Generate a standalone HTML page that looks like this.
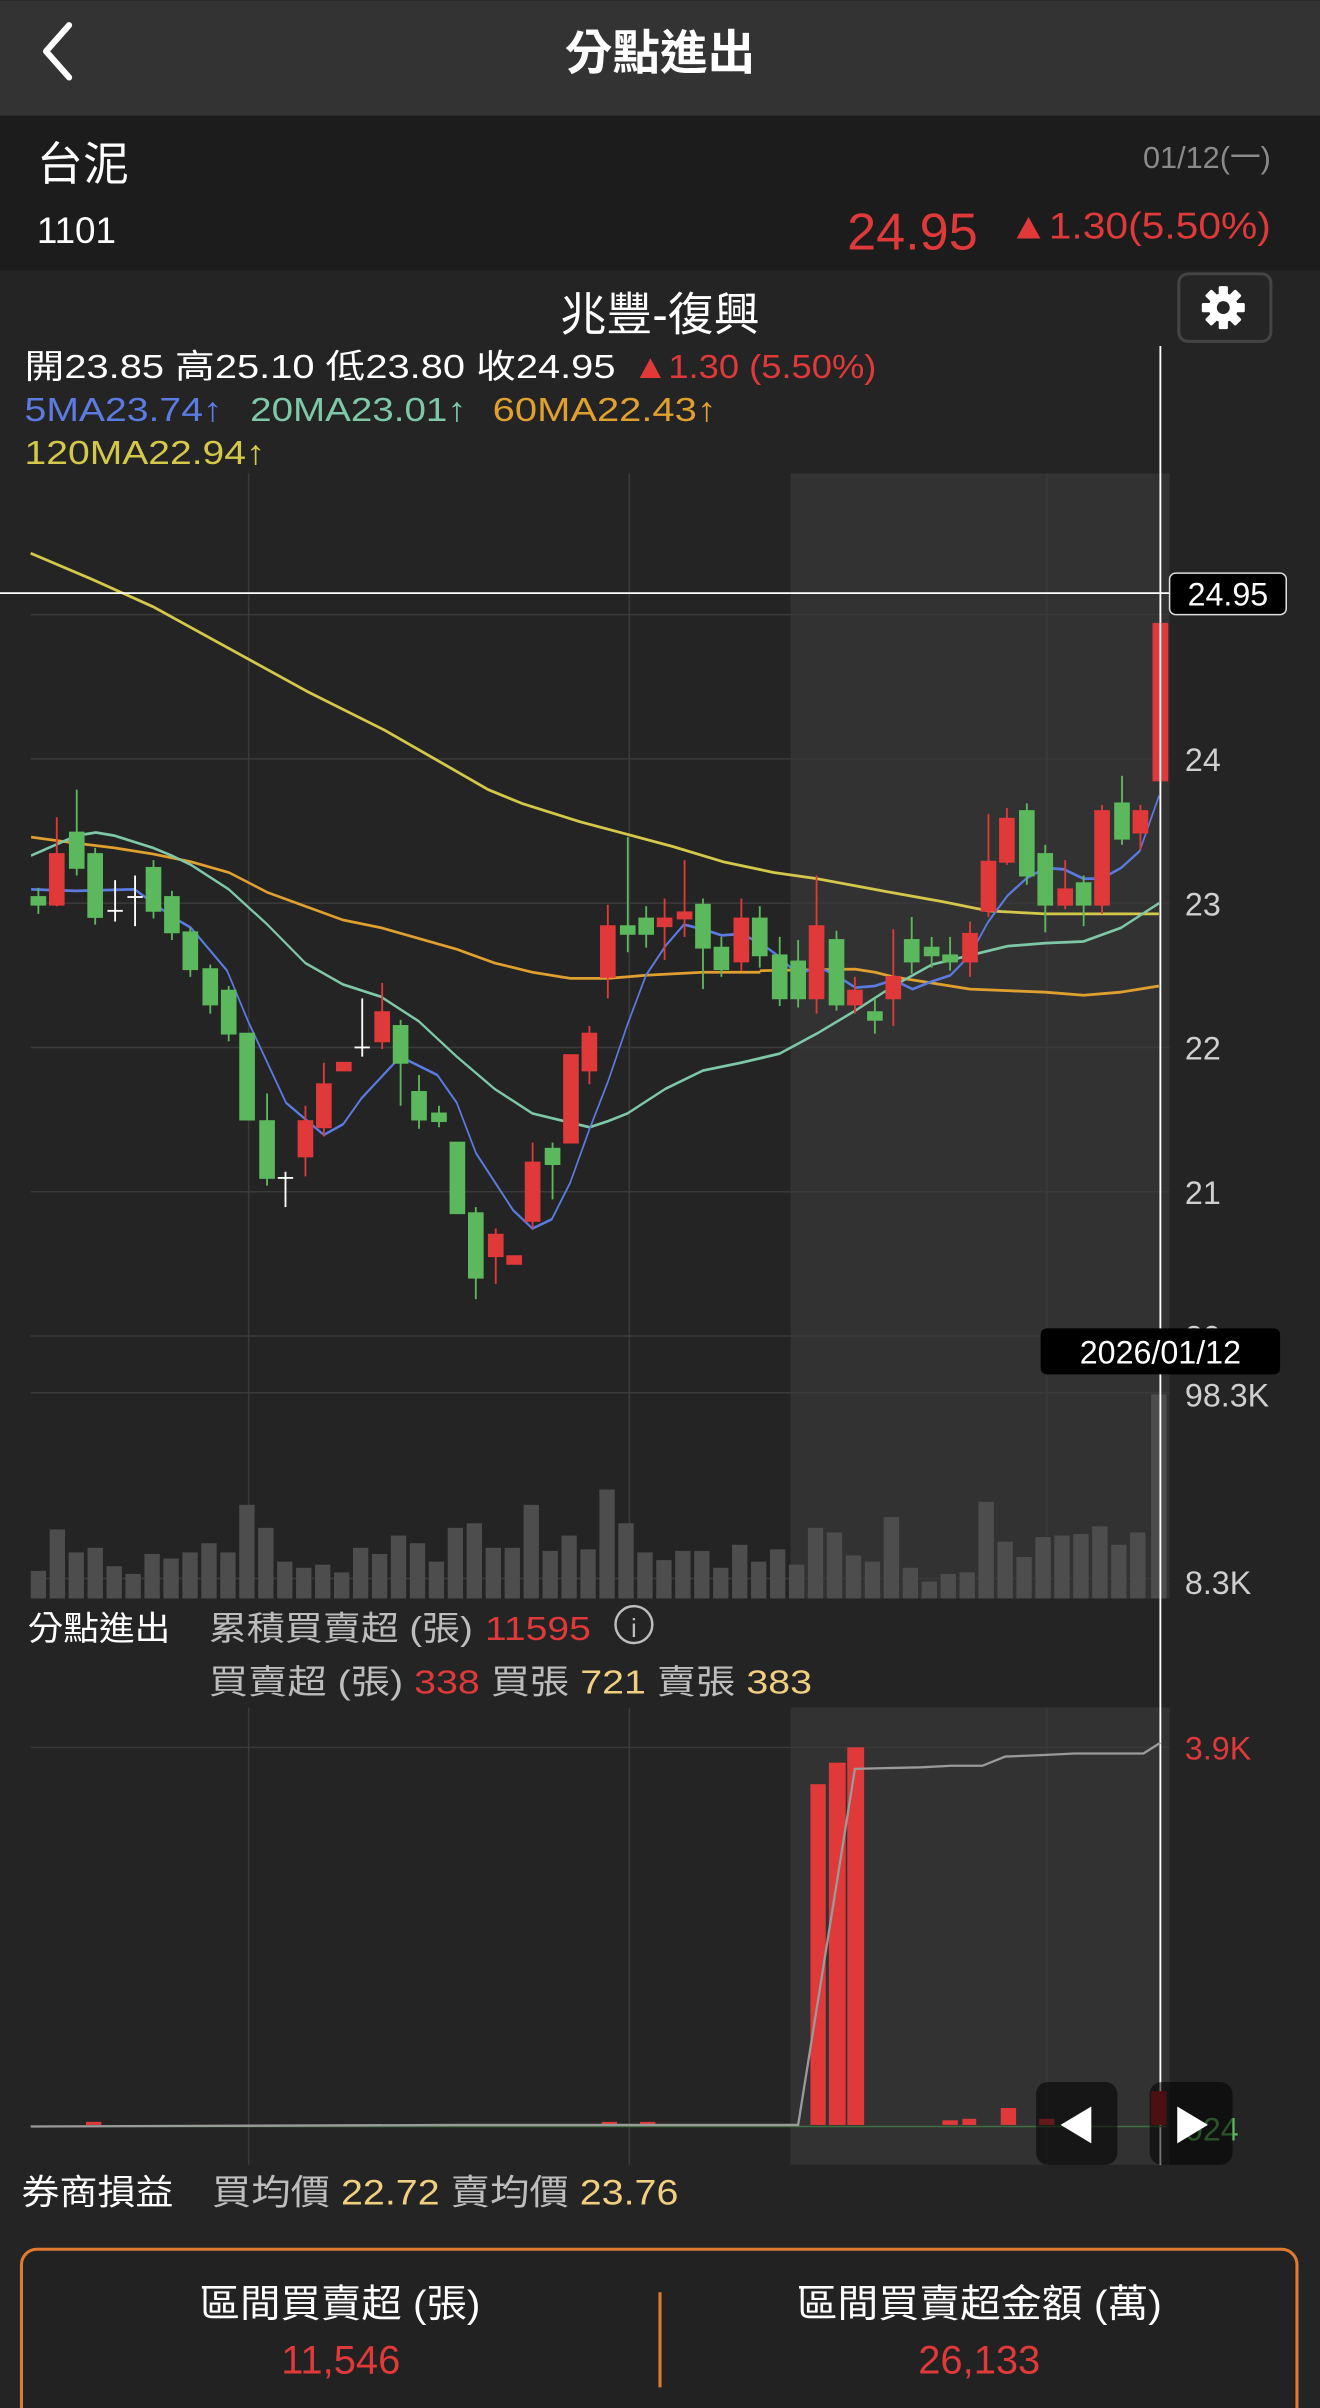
<!DOCTYPE html>
<html><head><meta charset="utf-8"><style>
html,body{margin:0;padding:0;background:#242424;width:1320px;height:2408px;overflow:hidden}
svg{display:block}
text{font-family:"Liberation Sans","Noto Sans CJK TC",sans-serif}
</style></head><body>
<svg width="1320" height="2408" viewBox="0 0 860 1568" xmlns="http://www.w3.org/2000/svg">
<rect width="860" height="1568" fill="#242424"/>
<!-- header -->
<rect x="0" y="0" width="860" height="75" fill="#333333"/>
<path d="M45 16 L30 33 L45 50" stroke="#fff" stroke-width="4" fill="none" stroke-linecap="round" stroke-linejoin="round"/>
<text x="430" y="45" font-size="31" font-weight="bold" fill="#fff" text-anchor="middle">分點進出</text>
<!-- stock info -->
<rect x="0" y="75" width="860" height="101" fill="#1c1c1c"/>
<text x="24" y="117" font-size="30" fill="#fff">台泥</text>
<text x="24" y="158" font-size="24" fill="#fff">1101</text>
<text x="828" y="109" font-size="20" fill="#8a8a8a" text-anchor="end">01/12(一)</text>
<text x="637" y="162" font-size="34" fill="#e0393a" text-anchor="end">24.95</text>
<text x="657" y="155" font-size="24" fill="#e0393a" textLength="171" lengthAdjust="spacingAndGlyphs">▲1.30(5.50%)</text>
<!-- broker title -->
<text x="430" y="215" font-size="30" fill="#fff" text-anchor="middle">兆豐-復興</text>
<rect x="768" y="178" width="60" height="44" rx="6" fill="#252525" stroke="#444" stroke-width="2"/>
<g transform="translate(797,200)" fill="#fff">
<circle r="9.5"/>
<g><rect x="-3" y="-14" width="6" height="28" rx="1"/><rect x="-3" y="-14" width="6" height="28" rx="1" transform="rotate(45)"/><rect x="-3" y="-14" width="6" height="28" rx="1" transform="rotate(90)"/><rect x="-3" y="-14" width="6" height="28" rx="1" transform="rotate(135)"/></g>
<circle r="4.2" fill="#252525"/>
</g>
<text x="16" y="246" font-size="22" fill="#fff" textLength="385" lengthAdjust="spacingAndGlyphs">開23.85 高25.10 低23.80 收24.95</text>
<text x="412" y="246" font-size="22" fill="#e0393a" textLength="159" lengthAdjust="spacingAndGlyphs">▲1.30 (5.50%)</text>
<text x="16" y="274" font-size="22" fill="#5b7be0" textLength="129" lengthAdjust="spacingAndGlyphs">5MA23.74↑</text>
<text x="163" y="274" font-size="22" fill="#7ec8a8" textLength="141" lengthAdjust="spacingAndGlyphs">20MA23.01↑</text>
<text x="321" y="274" font-size="22" fill="#e0a030" textLength="146" lengthAdjust="spacingAndGlyphs">60MA22.43↑</text>
<text x="16" y="302" font-size="22" fill="#d4c84a" textLength="157" lengthAdjust="spacingAndGlyphs">120MA22.94↑</text>
<!-- shaded region -->
<rect x="515" y="308" width="247" height="733" fill="#323232"/>
<rect x="515" y="1112" width="247" height="298" fill="#323232"/>
<!-- grid -->
<g stroke="#3a3a3a" stroke-width="1">
<line x1="162" y1="308" x2="162" y2="1041"/><line x1="410" y1="308" x2="410" y2="1041"/><line x1="682" y1="308" x2="682" y2="1041"/>
<line x1="162" y1="1112" x2="162" y2="1410"/><line x1="410" y1="1112" x2="410" y2="1410"/><line x1="682" y1="1112" x2="682" y2="1410"/>
<line x1="20" y1="400" x2="762" y2="400"/><line x1="20" y1="494" x2="762" y2="494"/><line x1="20" y1="588" x2="762" y2="588"/><line x1="20" y1="682" x2="762" y2="682"/><line x1="20" y1="776" x2="762" y2="776"/><line x1="20" y1="870" x2="762" y2="870"/>
<line x1="20" y1="907" x2="762" y2="907"/><line x1="20" y1="1028" x2="762" y2="1028"/>
<line x1="20" y1="1138" x2="762" y2="1138"/>
</g>
<g font-size="21" fill="#cfcfcf">
<text x="772" y="502">24</text><text x="772" y="596">23</text><text x="772" y="690">22</text><text x="772" y="784">21</text><text x="772" y="878">20</text>
<text x="772" y="916">98.3K</text><text x="772" y="1038">8.3K</text>
</g>
<!-- volume -->
<g fill="#4d4d4d">
<rect x="20" y="1023" width="10" height="18"/><rect x="32.35" y="996" width="10" height="45"/><rect x="44.7" y="1011" width="10" height="30"/><rect x="57.05" y="1008" width="10" height="33"/><rect x="69.4" y="1020" width="10" height="21"/><rect x="81.75" y="1025" width="10" height="16"/><rect x="94.1" y="1012" width="10" height="29"/><rect x="106.45" y="1015" width="10" height="26"/><rect x="118.8" y="1011" width="10" height="30"/><rect x="131.15" y="1005" width="10" height="36"/>
<rect x="143.5" y="1011" width="10" height="30"/><rect x="155.85" y="980" width="10" height="61"/><rect x="168.2" y="995" width="10" height="46"/><rect x="180.55" y="1017" width="10" height="24"/><rect x="192.9" y="1021" width="10" height="20"/><rect x="205.25" y="1019" width="10" height="22"/><rect x="217.6" y="1024" width="10" height="17"/><rect x="229.95" y="1008" width="10" height="33"/><rect x="242.3" y="1012" width="10" height="29"/><rect x="254.65" y="1000" width="10" height="41"/>
<rect x="267" y="1005" width="10" height="36"/><rect x="279.35" y="1017" width="10" height="24"/><rect x="291.7" y="995" width="10" height="46"/><rect x="304.05" y="992" width="10" height="49"/><rect x="316.4" y="1008" width="10" height="33"/><rect x="328.75" y="1008" width="10" height="33"/><rect x="341.1" y="980" width="10" height="61"/><rect x="353.45" y="1010" width="10" height="31"/><rect x="365.8" y="1000" width="10" height="41"/><rect x="378.15" y="1009" width="10" height="32"/>
<rect x="390.5" y="970" width="10" height="71"/><rect x="402.85" y="992" width="10" height="49"/><rect x="415.2" y="1011" width="10" height="30"/><rect x="427.55" y="1016" width="10" height="25"/><rect x="439.9" y="1010" width="10" height="31"/><rect x="452.25" y="1010" width="10" height="31"/><rect x="464.6" y="1021" width="10" height="20"/><rect x="476.95" y="1006" width="10" height="35"/><rect x="489.3" y="1017" width="10" height="24"/><rect x="501.65" y="1009" width="10" height="32"/>
<rect x="514" y="1019" width="10" height="22"/><rect x="526.35" y="995" width="10" height="46"/><rect x="538.7" y="998" width="10" height="43"/><rect x="551.05" y="1013" width="10" height="28"/><rect x="563.4" y="1017" width="10" height="24"/><rect x="575.75" y="988" width="10" height="53"/><rect x="588.1" y="1021" width="10" height="20"/><rect x="600.45" y="1030" width="10" height="11"/><rect x="612.8" y="1025" width="10" height="16"/><rect x="625.15" y="1024" width="10" height="17"/>
<rect x="637.5" y="978" width="10" height="63"/><rect x="649.85" y="1004" width="10" height="37"/><rect x="662.2" y="1014" width="10" height="27"/><rect x="674.55" y="1001" width="10" height="40"/><rect x="686.9" y="1000" width="10" height="41"/><rect x="699.25" y="999" width="10" height="42"/><rect x="711.6" y="994" width="10" height="47"/><rect x="723.95" y="1006" width="10" height="35"/><rect x="736.3" y="998" width="10" height="43"/><rect x="750" y="908" width="10" height="133"/>
</g>
<!-- MA lines -->
<g fill="none" stroke-width="1.8" stroke-linejoin="round">
<polyline stroke="#d4c84a" points="20,360 60,377 100,395 160,428 200,450 250,475 285,495 318,514 340,523 378,535 408,543 438,551 471,561 504,568 532,572 575,580 614,587 644,593 681,595 712,595 755,595"/>
<polyline stroke="#e0a030" points="37,545 91,549 136,552 182,556 227,561 272,568 318,581 363,590 408,599 453,604 498,611 543,618 588,627 633,633 678,637 723,637 768,635 836,633 904,633" transform="scale(0.548,1)"/>
<polyline stroke="#e0a030" points="495,632 557,631 570,633 582,636 607,640 632,644 656,645 681,646 706,648 730,646 755,642"/>
<polyline stroke="#7ec8a8" points="37,557 91,544 114,542 136,544 182,552 204,557 227,563 272,579 318,602 363,627 408,641 453,649 498,665 543,688 588,709 633,725 678,731 701,734 723,730 746,725 791,709 836,697 881,692 927,686 971,673 1017,658 1062,642 1108,628 1153,622 1198,616 1243,614 1288,613 1333,604 1378,588" transform="scale(0.548,1)"/>
<polyline stroke="#5b7be0" points="37,579 90,580 160,579 205,597 227,604 270,632 295,665 340,718 385,739 408,732 430,715 476,688 520,700 543,718 566,751 610,788 633,800 656,794 678,770 701,735 723,704 746,667 768,635 791,616 813,602 836,605 858,609 881,608 904,614 927,623 949,635 971,629 994,635 1017,643 1040,642 1062,638 1085,644 1108,639 1130,635 1153,622 1175,600 1198,583 1220,572 1243,565 1265,566 1288,572 1310,572 1333,565 1355,554 1378,518" transform="scale(0.548,1)"/>
</g>
<!-- candles -->
<g stroke-width="1.2">
<g stroke="#5cb85c" fill="#5cb85c">
<line x1="25" y1="578" x2="25" y2="595"/><rect x="20.5" y="584" width="9" height="5"/>
<line x1="50" y1="514" x2="50" y2="570"/><rect x="45.5" y="542" width="9" height="23"/>
<line x1="62" y1="552" x2="62" y2="602"/><rect x="57.5" y="556" width="9" height="41"/>
<line x1="100" y1="560" x2="100" y2="598"/><rect x="95.5" y="565" width="9" height="28"/>
<line x1="112" y1="580" x2="112" y2="612"/><rect x="107.5" y="584" width="9" height="23"/>
<line x1="124" y1="604" x2="124" y2="636"/><rect x="119.5" y="607" width="9" height="24"/>
<line x1="137" y1="628" x2="137" y2="660"/><rect x="132.5" y="631" width="9" height="23"/>
<line x1="149" y1="642" x2="149" y2="678"/><rect x="144.5" y="645" width="9" height="28"/>
<rect x="156.5" y="673" width="9" height="56"/>
<line x1="174" y1="712" x2="174" y2="772"/><rect x="169.5" y="730" width="9" height="37"/>
<line x1="261" y1="664" x2="261" y2="720"/><rect x="256.5" y="668" width="9" height="24"/>
<line x1="273" y1="700" x2="273" y2="735"/><rect x="268.5" y="711" width="9" height="18"/>
<line x1="286" y1="720" x2="286" y2="734"/><rect x="281.5" y="725" width="9" height="5"/>
<rect x="293.5" y="744" width="9" height="46"/>
<line x1="310" y1="786" x2="310" y2="846"/><rect x="305.5" y="790" width="9" height="42"/>
<line x1="360" y1="744" x2="360" y2="781"/><rect x="355.5" y="748" width="9" height="10"/>
<line x1="409" y1="545" x2="409" y2="620"/><rect x="404.5" y="603" width="9" height="5"/>
<line x1="421" y1="590" x2="421" y2="617"/><rect x="416.5" y="598" width="9" height="10"/>
<line x1="458" y1="585" x2="458" y2="644"/><rect x="453.5" y="589" width="9" height="28"/>
<line x1="470" y1="610" x2="470" y2="636"/><rect x="465.5" y="617" width="9" height="14"/>
<line x1="495" y1="590" x2="495" y2="630"/><rect x="490.5" y="598" width="9" height="24"/>
<line x1="508" y1="610" x2="508" y2="655"/><rect x="503.5" y="622" width="9" height="28"/>
<line x1="520" y1="612" x2="520" y2="656"/><rect x="515.5" y="626" width="9" height="24"/>
<line x1="545" y1="606" x2="545" y2="658"/><rect x="540.5" y="612" width="9" height="42"/>
<line x1="570" y1="650" x2="570" y2="673"/><rect x="565.5" y="659" width="9" height="5"/>
<line x1="594" y1="597" x2="594" y2="634"/><rect x="589.5" y="612" width="9" height="14"/>
<line x1="607" y1="610" x2="607" y2="630"/><rect x="602.5" y="617" width="9" height="5"/>
<line x1="619" y1="610" x2="619" y2="632"/><rect x="614.5" y="622" width="9" height="4"/>
<line x1="669" y1="523" x2="669" y2="576"/><rect x="664.5" y="528" width="9" height="42"/>
<line x1="681" y1="550" x2="681" y2="607"/><rect x="676.5" y="556" width="9" height="33"/>
<line x1="706" y1="570" x2="706" y2="603"/><rect x="701.5" y="575" width="9" height="14"/>
<line x1="731" y1="505" x2="731" y2="550"/><rect x="726.5" y="523" width="9" height="23"/>
</g>
<g stroke="#e0393a" fill="#e0393a">
<line x1="37" y1="532" x2="37" y2="590"/><rect x="32.5" y="556" width="9" height="33"/>
<line x1="199" y1="720" x2="199" y2="766"/><rect x="194.5" y="730" width="9" height="23"/>
<line x1="211" y1="692" x2="211" y2="740"/><rect x="206.5" y="706" width="9" height="28"/>
<rect x="219.5" y="692" width="9" height="5"/>
<line x1="249" y1="640" x2="249" y2="683"/><rect x="244.5" y="659" width="9" height="19"/>
<line x1="323" y1="800" x2="323" y2="836"/><rect x="318.5" y="804" width="9" height="14"/>
<rect x="330.5" y="818" width="9" height="5"/>
<line x1="347" y1="744" x2="347" y2="800"/><rect x="342.5" y="757" width="9" height="38"/>
<rect x="367.5" y="687" width="9" height="57"/>
<line x1="384" y1="668" x2="384" y2="706"/><rect x="379.5" y="673" width="9" height="24"/>
<line x1="396" y1="589" x2="396" y2="650"/><rect x="391.5" y="603" width="9" height="33"/>
<line x1="433" y1="585" x2="433" y2="625"/><rect x="428.5" y="598" width="9" height="5"/>
<line x1="446" y1="560" x2="446" y2="610"/><rect x="441.5" y="594" width="9" height="4"/>
<line x1="483" y1="585" x2="483" y2="632"/><rect x="478.5" y="598" width="9" height="28"/>
<line x1="532" y1="570" x2="532" y2="660"/><rect x="527.5" y="603" width="9" height="47"/>
<line x1="557" y1="636" x2="557" y2="660"/><rect x="552.5" y="645" width="9" height="9"/>
<line x1="582" y1="605" x2="582" y2="668"/><rect x="577.5" y="636" width="9" height="14"/>
<line x1="632" y1="600" x2="632" y2="636"/><rect x="627.5" y="608" width="9" height="18"/>
<line x1="644" y1="530" x2="644" y2="597"/><rect x="639.5" y="561" width="9" height="32"/>
<line x1="656" y1="526" x2="656" y2="563"/><rect x="651.5" y="533" width="9" height="28"/>
<line x1="694" y1="560" x2="694" y2="592"/><rect x="689.5" y="579" width="9" height="10"/>
<line x1="718" y1="524" x2="718" y2="595"/><rect x="713.5" y="528" width="9" height="61"/>
<line x1="743" y1="524" x2="743" y2="553"/><rect x="738.5" y="528" width="9" height="14"/>
<line x1="756" y1="400" x2="756" y2="512"/><rect x="751.5" y="406" width="9" height="102"/>
</g>
<g stroke="#fff" stroke-width="1.2">
<line x1="75" y1="573" x2="75" y2="600"/><line x1="70" y1="593" x2="80" y2="593"/>
<line x1="88" y1="570" x2="88" y2="603"/><line x1="83" y1="584" x2="93" y2="584"/>
<line x1="186" y1="763" x2="186" y2="786"/><line x1="181" y1="767" x2="191" y2="767"/>
<line x1="236" y1="650" x2="236" y2="688"/><line x1="231" y1="682" x2="241" y2="682"/>
</g>
</g>
<!-- crosshair -->
<line x1="0" y1="386" x2="762" y2="386" stroke="#fff" stroke-width="1.2"/>
<line x1="756" y1="225" x2="756" y2="1410" stroke="#fff" stroke-width="1.2"/>
<rect x="762" y="373" width="76" height="27" rx="4" fill="#000" stroke="#ddd" stroke-width="1"/>
<text x="800" y="394" font-size="21" fill="#fff" text-anchor="middle">24.95</text>
<rect x="678" y="865" width="156" height="30" rx="4" fill="#000"/>
<text x="756" y="888" font-size="21" fill="#fff" text-anchor="middle">2026/01/12</text>
<!-- 分點進出 labels -->
<text x="18" y="1068" font-size="22" fill="#fff" textLength="93" lengthAdjust="spacingAndGlyphs">分點進出</text>
<text x="136" y="1068" font-size="22" fill="#bdbdbd" textLength="172" lengthAdjust="spacingAndGlyphs">累積買賣超 (張)</text>
<text x="316" y="1068" font-size="22" fill="#e0393a" textLength="69" lengthAdjust="spacingAndGlyphs">11595</text>
<circle cx="413" cy="1058" r="12" fill="none" stroke="#bdbdbd" stroke-width="1.6"/>
<text x="413" y="1066" font-size="17" fill="#bdbdbd" text-anchor="middle">i</text>
<text x="136" y="1103" font-size="22" textLength="393" lengthAdjust="spacingAndGlyphs"><tspan fill="#bdbdbd">買賣超 (張) </tspan><tspan fill="#e0393a">338 </tspan><tspan fill="#bdbdbd">買張 </tspan><tspan fill="#f0d080">721 </tspan><tspan fill="#bdbdbd">賣張 </tspan><tspan fill="#f0d080">383</tspan></text>
<!-- lower chart -->
<text x="772" y="1146" font-size="21" fill="#e0393a">3.9K</text>
<line x1="20" y1="1385" x2="760" y2="1385" stroke="#3f6f3f" stroke-width="1"/>
<g fill="#e0393a">
<rect x="528" y="1162" width="10" height="222"/><rect x="540" y="1148" width="11" height="236"/><rect x="552" y="1138" width="11" height="246"/>
<rect x="56" y="1382" width="10" height="2"/><rect x="392" y="1382" width="10" height="2"/><rect x="417" y="1382" width="10" height="2"/>
<rect x="614" y="1381" width="10" height="3"/><rect x="627" y="1380" width="9" height="4"/><rect x="652" y="1373" width="10" height="11"/><rect x="677" y="1380" width="10" height="4"/>
<rect x="750" y="1362" width="10" height="22" fill="#a82525"/>
</g>
<polyline fill="none" stroke="#9a9a9a" stroke-width="1.5" points="20,1385 300,1384 520,1384 557,1152 600,1151 620,1150 640,1150 655,1144 680,1143 700,1142 745,1142 756,1135"/>
<rect x="675" y="1356" width="53" height="54" rx="8" fill="#000" fill-opacity="0.55"/>
<path d="M711 1372 L711 1396 L691 1384 Z" fill="#fff"/>
<text x="772" y="1394" font-size="21" fill="#5cb85c">024</text>
<rect x="749" y="1356" width="54" height="54" rx="8" fill="#000" fill-opacity="0.55"/>
<path d="M767 1372 L767 1396 L787 1384 Z" fill="#fff"/>
<!-- 券商損益 -->
<text x="14" y="1436" font-size="23" fill="#fff" textLength="99" lengthAdjust="spacingAndGlyphs">券商損益</text>
<text x="138" y="1436" font-size="23" textLength="304" lengthAdjust="spacingAndGlyphs"><tspan fill="#bdbdbd">買均價 </tspan><tspan fill="#f0d080">22.72 </tspan><tspan fill="#bdbdbd">賣均價 </tspan><tspan fill="#f0d080">23.76</tspan></text>
<!-- summary box -->
<rect x="14" y="1465" width="831" height="130" rx="10" fill="#222" stroke="#e07a30" stroke-width="2"/>
<line x1="430" y1="1493" x2="430" y2="1555" stroke="#e07a30" stroke-width="2"/>
<text x="130" y="1509" font-size="25" fill="#fff" textLength="183" lengthAdjust="spacingAndGlyphs">區間買賣超 (張)</text>
<text x="222" y="1546" font-size="26" fill="#e0393a" text-anchor="middle">11,546</text>
<text x="519" y="1509" font-size="25" fill="#fff" textLength="238" lengthAdjust="spacingAndGlyphs">區間買賣超金額 (萬)</text>
<text x="638" y="1546" font-size="26" fill="#e0393a" text-anchor="middle">26,133</text>
</svg>
</body></html>
